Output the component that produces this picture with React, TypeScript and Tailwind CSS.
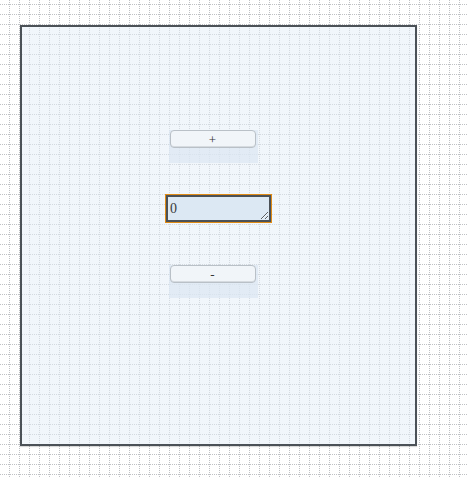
import React, { useState } from 'react';

// Dotted grid used as the page backdrop
function GridBackdrop() {
  return (
    <svg className="absolute inset-0 w-full h-full" xmlns="http://www.w3.org/2000/svg">
      <defs>
        <pattern id="grid" width="10" height="10" patternUnits="userSpaceOnUse">
          <line x1="9.5" y1="0" x2="9.5" y2="10" stroke="#bfc1c4" strokeWidth="1" strokeDasharray="1 1" />
          <line x1="0" y1="4.5" x2="10" y2="4.5" stroke="#bfc1c4" strokeWidth="1" strokeDasharray="1 1" />
        </pattern>
      </defs>
      <rect width="100%" height="100%" fill="url(#grid)" />
    </svg>
  );
}

function StepButton({ label, onClick }: { label: string; onClick: () => void }) {
  return (
    <div className="relative w-[89px] h-[33px] bg-[#dbe7f2]/70">
      <button
        onClick={onClick}
        className="absolute left-[1px] top-0 w-[86px] h-[18px] rounded-[4px] border border-[#b9c0c7] bg-[#f1f5f9] text-[13px] leading-none text-[#333] shadow-[inset_0_-1px_0_#d6dbe0]"
        style={{ fontFamily: '"Liberation Serif", serif' }}
      >
        {label}
      </button>
    </div>
  );
}

export default function App() {
  const [count, setCount] = useState(0);

  return (
    <div className="relative w-[468px] h-[477px] bg-white overflow-hidden">
      <GridBackdrop />

      <div className="relative pt-[25px] pl-[20px]">
        <div className="w-[397px] h-[421px] border-2 border-[#4b5157] bg-[#e6eff7]/55 shadow-[0_1px_1px_rgba(0,0,0,0.15)] flex flex-col items-center">
          <div className="mt-[103px] mr-[11px]">
            <StepButton label="+" onClick={() => setCount(c => c + 1)} />
          </div>

          <div className="mt-[31px] border border-[#e08a14] leading-none">
            <textarea
              value={String(count)}
              onChange={e => setCount(Number(e.target.value) || 0)}
              className="block w-[105px] h-[27px] border-2 border-[#4b5157] bg-[#dce8f3] px-[2px] pt-[4px] text-[14px] leading-[16px] text-[#3a3a3a] outline-none"
              style={{ fontFamily: '"Liberation Serif", serif' }}
            />
          </div>

          <div className="mt-[42px] mr-[11px]">
            <StepButton label="-" onClick={() => setCount(c => c - 1)} />
          </div>
        </div>
      </div>
    </div>
  );
}
